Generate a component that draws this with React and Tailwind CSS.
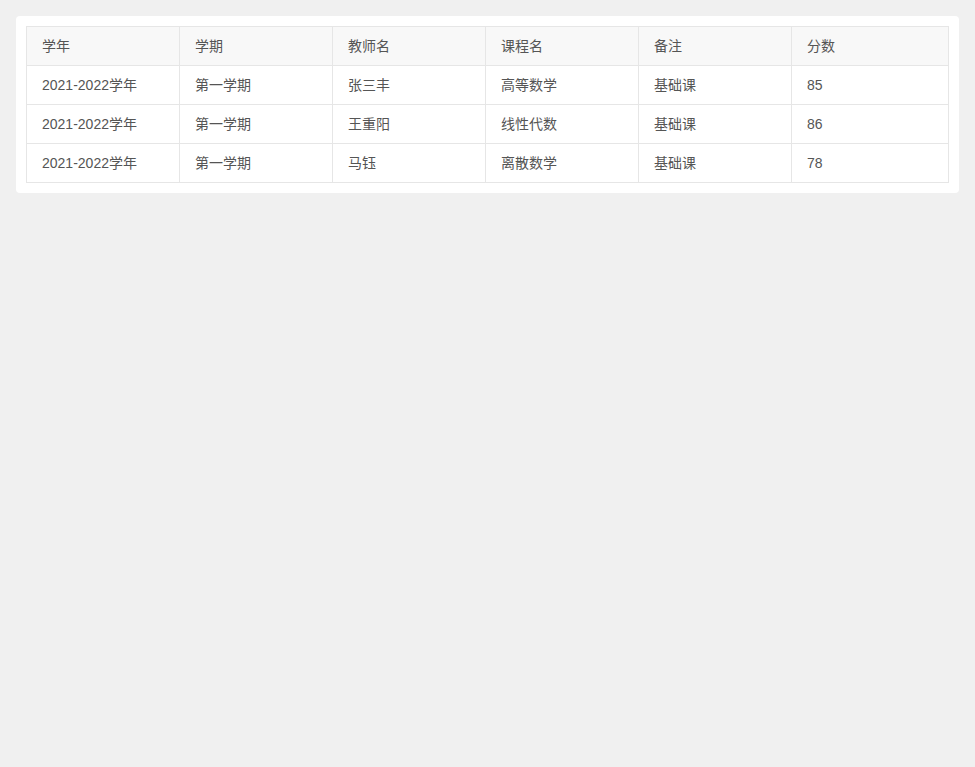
const rows = [
  ["2021-2022学年", "第一学期", "张三丰", "高等数学", "基础课", "85"],
  ["2021-2022学年", "第一学期", "王重阳", "线性代数", "基础课", "86"],
  ["2021-2022学年", "第一学期", "马钰", "离散数学", "基础课", "78"],
];

const headers = ["学年", "学期", "教师名", "课程名", "备注", "分数"];

export default function App() {
  return (
    <div className="min-h-[767px] bg-[#f0f0f0] p-4 font-['Liberation_Sans','Noto_Sans_CJK_SC',sans-serif] text-sm text-[#555]">
      <div className="rounded-sm bg-white p-[10px]">
        <table className="w-full table-fixed border-collapse border border-[#e6e6e6]">
          <colgroup>
            <col className="w-[153px]" />
            <col className="w-[153px]" />
            <col className="w-[153px]" />
            <col className="w-[153px]" />
            <col className="w-[153px]" />
            <col />
          </colgroup>
          <thead>
            <tr className="bg-[#f8f8f8]">
              {headers.map((h) => (
                <th key={h} className="border border-[#e6e6e6] px-[15px] py-[9px] text-left font-normal leading-5">
                  {h}
                </th>
              ))}
            </tr>
          </thead>
          <tbody>
            {rows.map((r, i) => (
              <tr key={i}>
                {r.map((c, j) => (
                  <td key={j} className="border border-[#e6e6e6] px-[15px] py-[9px] leading-5">
                    {c}
                  </td>
                ))}
              </tr>
            ))}
          </tbody>
        </table>
      </div>
    </div>
  );
}
